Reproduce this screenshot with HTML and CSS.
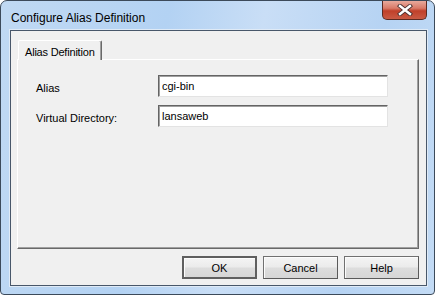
FILE: index.html
```html
<!DOCTYPE html>
<html>
<head>
  <title>Configure Alias Definition</title>
  <link rel="stylesheet" href="styles.css">
</head>
<body>
  <div class="window">
    <div class="titlebar">
      <span class="title">Configure Alias Definition</span>
      <div class="close-btn">
        <svg width="18" height="12" viewBox="0 0 18 12">
          <path d="M4 2 L14 10 M14 2 L4 10" stroke="#4a3030" stroke-width="4.2" stroke-linecap="square"/>
          <path d="M4 2 L14 10 M14 2 L4 10" stroke="#ffffff" stroke-width="2.4" stroke-linecap="square"/>
        </svg>
      </div>
    </div>

    <div class="client">
      <div class="tabs">
        <div class="tab active">Alias Definition</div>
      </div>
      <div class="panel">
        <div class="form-grid">
          <label for="alias">Alias</label>
          <input type="text" id="alias" value="cgi-bin">
          <label for="virtualDir">Virtual Directory:</label>
          <input type="text" id="virtualDir" value="lansaweb">
        </div>
      </div>
      <div class="buttons">
        <button type="button">OK</button>
        <button type="button">Cancel</button>
        <button type="button">Help</button>
      </div>
    </div>
  </div>
</body>
</html>
```

FILE: styles.css
```css
/* Dialog window styles */

body {
  margin: 0;
  padding: 0;
  font-family: "Liberation Sans", Arial, sans-serif;
  font-size: 11px;
  background-color: #ffffff;
}

.window {
  width: 435px;
  height: 295px;
  box-sizing: border-box;
  border: 1px solid #3c4a5a;
  border-radius: 7px 7px 4px 4px;
  background: linear-gradient(100deg, #c0d9f3 0%, #b3d2f3 35%, #c9def6 55%, #b6d3f3 80%, #c3dbf5 100%);
  display: flex;
  flex-direction: column;
  padding: 0 7px 8px 9px;
}

.titlebar {
  height: 29px;
  display: flex;
  justify-content: space-between;
  align-items: flex-start;
  flex-shrink: 0;
}

.title {
  font-size: 12px;
  color: #000;
  margin-top: 10px;
  margin-left: 1px;
}

.close-btn {
  width: 45px;
  height: 19px;
  box-sizing: border-box;
  border: 1px solid #5a2a22;
  border-top: none;
  border-radius: 0 0 5px 5px;
  background: linear-gradient(to bottom, #e8a99c 0%, #d97a68 40%, #c0402a 55%, #c95a44 100%);
  display: flex;
  align-items: center;
  justify-content: center;
}

.client {
  flex: 1;
  display: flex;
  flex-direction: column;
  background-color: #f0f0f0;
  border: 1px solid #48576a;
  box-shadow: 0 0 0 1px #dfeaf6;
  padding: 9px 7px 6px 6px;
}

.tabs {
  display: flex;
  padding-left: 1px;
  height: 20px;
  position: relative;
  z-index: 1;
}

.tab {
  background-color: #f0f0f0;
  border-top: 1px solid #ffffff;
  border-left: 1px solid #ffffff;
  border-right: 1px solid #696969;
  box-shadow: inset -1px 0 0 #a0a0a0;
  padding: 5px 6px 0 6px;
  height: 20px;
  box-sizing: border-box;
  color: #000;
  letter-spacing: -0.2px;
  border-radius: 2px 2px 0 0;
}

.panel {
  flex: 1;
  margin-top: -1px;
  border-top: 1px solid #ffffff;
  border-left: 1px solid #ffffff;
  border-right: 1px solid #696969;
  border-bottom: 1px solid #696969;
  box-shadow: inset -1px -1px 0 #a0a0a0;
  padding: 15px 0 0 18px;
}

.form-grid {
  display: grid;
  grid-template-columns: 122px 230px;
  row-gap: 8px;
  align-items: center;
}

.form-grid label {
  color: #000;
  padding-top: 4px;
}

.form-grid input[type="text"] {
  height: 22px;
  box-sizing: border-box;
  border-top: 1px solid #646464;
  border-left: 1px solid #646464;
  border-right: 1px solid #e3e3e3;
  border-bottom: 1px solid #e3e3e3;
  box-shadow: inset 1px 1px 0 #a0a0a0;
  background-color: #ffffff;
  font-family: inherit;
  font-size: 11px;
  padding: 0 3px 1px 3px;
  outline: none;
  color: #000;
}

.buttons {
  display: flex;
  justify-content: flex-end;
  gap: 6px;
  margin-top: 7px;
}

.buttons button {
  width: 75px;
  height: 23px;
  box-sizing: border-box;
  border: 1px solid #707070;
  border-right-color: #5a5a5a;
  border-bottom-color: #5a5a5a;
  background: linear-gradient(to bottom, #f4f4f4 0%, #ebebeb 48%, #dddddd 52%, #d6d6d6 100%);
  box-shadow: inset 1px 1px 0 #fcfcfc;
  font-family: inherit;
  font-size: 11px;
  color: #000;
  padding: 0;
}

.buttons button:first-child {
  border: 2px solid #5f5f5f;
}
```
